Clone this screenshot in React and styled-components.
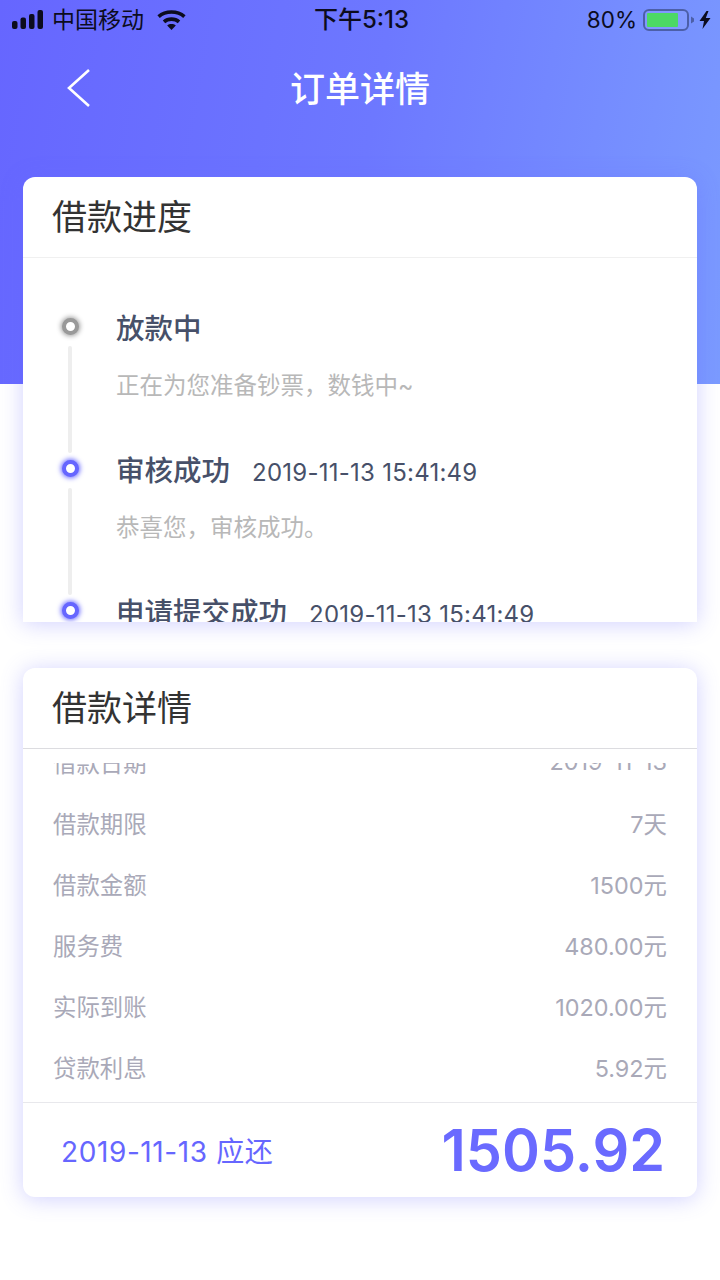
import React from "react";
import styled, { createGlobalStyle } from "styled-components";

const GlobalStyle = createGlobalStyle`
	html, body {
		margin: 0;
		padding: 0;
		background: #fff;
	}
	body {
		font-family: "Inter", "Noto Sans CJK SC", sans-serif;
	}
	* {
		box-sizing: border-box;
	}
`;

const steps = [
	{ title: "放款中", desc: "正在为您准备钞票\uFF0C数钱中~", tone: "#999999" },
	{ title: "审核成功", time: "2019-11-13 15:41:49", desc: "恭喜您\uFF0C审核成功。", tone: "#6666ff" },
	{ title: "申请提交成功", time: "2019-11-13 15:41:49", desc: "", tone: "#6666ff" },
];

const details = [
	["借款日期", "2019-11-13"],
	["借款期限", "7天"],
	["借款金额", "1500元"],
	["服务费", "480.00元"],
	["实际到账", "1020.00元"],
	["贷款利息", "5.92元"],
];

const App = () => {
	return (
		<Page>
			<GlobalStyle />
			<Header>
				<StatusBar>
					<StatusSide>
						<svg width="32" height="20" viewBox="0 0 32 20" fill="#0c0c1e">
							<rect x="0" y="11" width="5.5" height="8" rx="2" />
							<rect x="8.5" y="7.5" width="5.5" height="11.5" rx="2" />
							<rect x="17" y="4" width="5.5" height="15" rx="2" />
							<rect x="25.5" y="0" width="5.5" height="19" rx="2" />
						</svg>
						<Carrier>中国移动</Carrier>
						<WifiIcon width="29" height="20" viewBox="0 0 29 20" fill="none" stroke="#0c0c1e" strokeWidth="3.6">
							<path d="M1.6 6.6C8.6 0.4 20.4 0.4 27.4 6.6" />
							<path d="M7 11.8C11 8.2 18 8.2 22 11.8" />
							<path d="M10.2 15.4C12.6 13.6 16.4 13.6 18.8 15.4L14.5 20Z" fill="#0c0c1e" stroke="none" />
						</WifiIcon>
					</StatusSide>
					<Clock>下午5:13</Clock>
					<StatusRight>
						<Percent>80%</Percent>
						<svg width="51" height="22" viewBox="0 0 51 22">
							<rect x="1" y="1" width="44" height="20" rx="5" fill="rgba(255,255,255,0.08)" stroke="#4c5fa8" strokeWidth="2" />
							<rect x="4" y="4" width="31" height="14" rx="1" fill="#4cd964" />
							<path d="M48 7.5 L51 9.5 L51 12.5 L48 14.5 Z" fill="#4c5fa8" />
						</svg>
						<svg width="12" height="18" viewBox="0 0 12 18" fill="#0c0c1e">
							<path d="M7.5 0 L0.5 10 L5 10 L3.5 18 L11.5 7 L6.8 7 L9.5 0 Z" />
						</svg>
					</StatusRight>
				</StatusBar>
				<NavBar>
					<Back>
						<svg width="26" height="40" viewBox="0 0 26 40" fill="none" stroke="#fff" strokeWidth="2.6">
							<path d="M23 2 L3 20 L23 38" />
						</svg>
					</Back>
					<NavTitle>订单详情</NavTitle>
				</NavBar>
			</Header>

			<Content>
				<ProgressCard>
					<CardHead>
						<CardTitle>借款进度</CardTitle>
					</CardHead>
					<Timeline>
						{steps.map((step) => (
							<Step key={step.title}>
								<Rail>
									<Dot $tone={step.tone} />
									<Line />
								</Rail>
								<StepBody>
									<StepHead>
										<StepTitle>{step.title}</StepTitle>
										{step.time && <StepTime>{step.time}</StepTime>}
									</StepHead>
									<StepDesc>{step.desc}</StepDesc>
								</StepBody>
							</Step>
						))}
					</Timeline>
				</ProgressCard>

				<DetailCard>
					<CardHead $dark>
						<CardTitle>借款详情</CardTitle>
					</CardHead>
					<DetailList>
						<DetailInner>
							{details.map(([label, value]) => (
								<DetailRow key={label}>
									<DetailText>{label}</DetailText>
									<DetailText>{value}</DetailText>
								</DetailRow>
							))}
						</DetailInner>
					</DetailList>
					<Footer>
						<DueDate>2019-11-13 应还</DueDate>
						<Amount>1505.92</Amount>
					</Footer>
				</DetailCard>
			</Content>
		</Page>
	);
};

export default App;

const Page = styled.div`
	width: 720px;
	height: 1280px;
	overflow: hidden;
	background: #fff;
`;

const Header = styled.div`
	height: 384px;
	background: linear-gradient(100deg, #6666ff 0%, #6d78ff 50%, #7b9bff 100%);
`;

const StatusBar = styled.div`
	height: 40px;
	padding: 0 9px 0 12px;
	display: grid;
	grid-template-columns: 1fr auto 1fr;
	align-items: center;
	color: #0c0c1e;
`;

const StatusSide = styled.div`
	display: flex;
	align-items: center;
`;

const StatusRight = styled(StatusSide)`
	justify-content: flex-end;
	gap: 5px;
`;

const WifiIcon = styled.svg`
	margin-top: -1px;
`;

const Carrier = styled.span`
	font-size: 23px;
	line-height: 34px;
	margin: 0 13px 1px 8px;
`;

const Clock = styled.span`
	font-size: 24px;
	font-weight: 500;
	line-height: 34px;
`;

const Percent = styled.span`
	font-size: 22.5px;
	line-height: 34px;
	margin-right: 1px;
`;

const NavBar = styled.div`
	height: 96px;
	padding-bottom: 4px;
	position: relative;
	display: flex;
	align-items: center;
	justify-content: center;
`;

const Back = styled.div`
	position: absolute;
	left: 66px;
	top: 28px;
	line-height: 0;
`;

const NavTitle = styled.h1`
	margin: 0;
	font-size: 35px;
	font-weight: 500;
	color: #fff;
`;

const Content = styled.div`
	margin-top: -207px;
	padding: 0 23px;
	display: flex;
	flex-direction: column;
	gap: 46px;
`;

const Card = styled.div`
	background: #fff;
	box-shadow: 0 2px 22px rgba(102, 102, 255, 0.3);
	overflow: hidden;
`;

const ProgressCard = styled(Card)`
	height: 445px;
	border-radius: 12px 12px 0 0;
`;

const DetailCard = styled(Card)`
	height: 529px;
	border-radius: 12px;
	display: flex;
	flex-direction: column;
`;

const CardHead = styled.div`
	height: 81px;
	padding: 0 0 6px 29px;
	display: flex;
	align-items: center;
	border-bottom: 1px solid ${({ $dark }) => ($dark ? "#dcdce0" : "#f0f0f0")};
`;

const CardTitle = styled.span`
	font-size: 35px;
	color: #333;
`;

const Timeline = styled.div`
	padding: 53px 0 0 36px;
`;

const Step = styled.div`
	height: 142px;
	display: flex;
`;

const Rail = styled.div`
	width: 22px;
	display: flex;
	flex-direction: column;
	align-items: center;
`;

const Dot = styled.div`
	width: 17px;
	height: 17px;
	flex-shrink: 0;
	margin-top: 7px;
	border-radius: 50%;
	background: #fff;
	border: 4.5px solid ${({ $tone }) => $tone};
	box-shadow: 0 0 5px 1px ${({ $tone }) => $tone};
	filter: blur(0.5px);
`;

const Line = styled.div`
	width: 4px;
	margin-top: 11px;
	height: 107px;
	border-radius: 2px;
	background: #eeeeee;
`;

const StepBody = styled.div`
	margin-left: 35px;
`;

const StepHead = styled.div`
	height: 38px;
	display: flex;
	align-items: center;
	gap: 22px;
`;

const StepTitle = styled.span`
	font-size: 28.5px;
	font-weight: 500;
	color: #475069;
	margin-bottom: 8px;
`;

const StepTime = styled.span`
	font-size: 24px;
	letter-spacing: 0.25px;
	color: #475069;
`;

const StepDesc = styled.div`
	margin-top: 18px;
	font-size: 23.5px;
	color: #b8b8b8;
`;

const DetailList = styled.div`
	flex: 1;
	margin-top: 14px;
	overflow: hidden;
`;

const DetailInner = styled.div`
	margin-top: -31px;
`;

const DetailRow = styled.div`
	height: 61px;
	padding: 0 30px 2px;
	display: flex;
	align-items: center;
	justify-content: space-between;
`;

const DetailText = styled.span`
	font-size: 23.4px;
	color: #a9a9b8;
`;

const Footer = styled.div`
	height: 95px;
	padding: 0 32px 0 38px;
	display: flex;
	align-items: center;
	justify-content: space-between;
	border-top: 1px solid #e8e8ec;
`;

const DueDate = styled.span`
	font-size: 28px;
	letter-spacing: 0.6px;
	color: #6666ff;
`;

const Amount = styled.span`
	font-size: 57.5px;
	font-weight: 600;
	color: #6a6aff;
`;
